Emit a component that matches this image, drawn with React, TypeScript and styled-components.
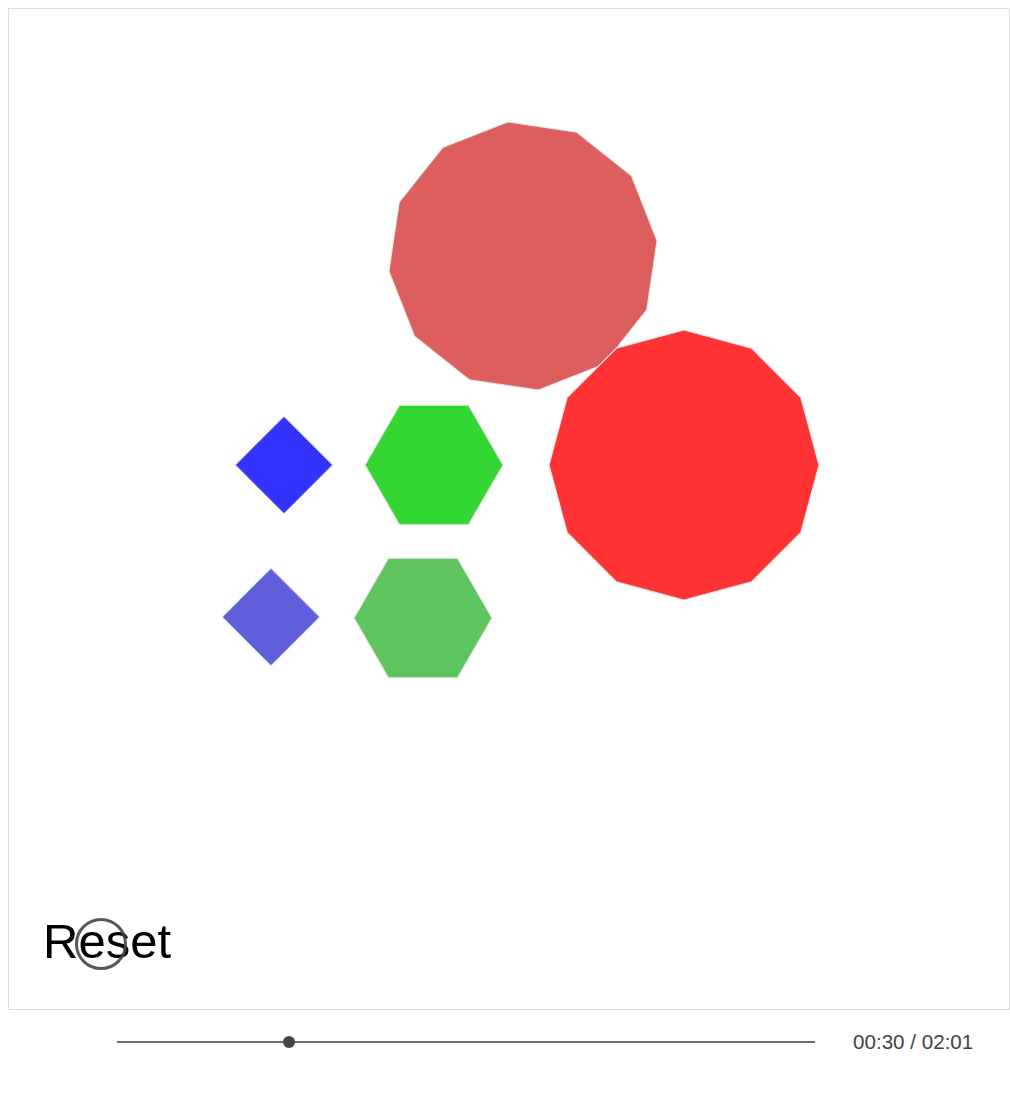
import React from 'react';
import styled, { createGlobalStyle } from 'styled-components';

const GlobalStyle = createGlobalStyle`
  html, body {
    overflow: visible;
  }
  body {
    margin: 8px 0 8px 8px;
    background: #ffffff;
    font-family: 'Liberation Sans', Arial, sans-serif;
  }
`;

const Stage = styled.div`
  position: relative;
  box-sizing: border-box;
  width: 1002px;
  height: 1002px;
  border: 1px solid #dddddd;
  display: flex;
  align-items: flex-end;
  padding: 0 0 40px 34px;
`;

const Drawing = styled.svg`
  position: absolute;
  inset: 0;
  width: 1000px;
  height: 1000px;
`;

const ResetButton = styled.button`
  position: relative;
  z-index: 1;
  background: none;
  border: none;
  padding: 0;
  margin: 0;
  font-family: 'Liberation Sans', Arial, sans-serif;
  font-size: 49px;
  line-height: 56px;
  color: #000000;
  cursor: pointer;
`;

const TouchRing = styled.div`
  position: absolute;
  left: 66px;
  top: 909px;
  width: 52px;
  height: 52px;
  border: 3px solid rgba(70, 70, 70, 0.9);
  border-radius: 50%;
  box-sizing: border-box;
  pointer-events: none;
  z-index: 2;
`;

const Controls = styled.div`
  display: flex;
  align-items: center;
  height: 64px;
  width: 1002px;
`;

const Track = styled.div`
  position: relative;
  margin-left: 109px;
  width: 698px;
  height: 12px;
  &::before {
    content: '';
    position: absolute;
    left: 0;
    right: 0;
    top: 5px;
    height: 2px;
    background: #6b6b6b;
  }
`;

const Thumb = styled.div`
  position: absolute;
  top: 0;
  width: 12px;
  height: 12px;
  margin-left: -7px;
  border-radius: 50%;
  background: #444444;
`;

const TimeLabel = styled.span`
  margin-left: 38px;
  font-family: 'Liberation Sans', Arial, sans-serif;
  font-size: 20.6px;
  color: #444444;
`;

type Shape = { cx: number; cy: number; r: number; sides: number; rot: number; fill: string };

const shapes: Shape[] = [
  { cx: 514, cy: 247, r: 135, sides: 12, rot: -6.5, fill: '#dd5e5e' },
  { cx: 675, cy: 456, r: 135, sides: 12, rot: 0, fill: '#ff3333' },
  { cx: 275, cy: 456, r: 49, sides: 4, rot: 0, fill: '#3333ff' },
  { cx: 425, cy: 456, r: 69, sides: 6, rot: 30, fill: '#33d633' },
  { cx: 262, cy: 608, r: 49, sides: 4, rot: 0, fill: '#5e5edd' },
  { cx: 414, cy: 609, r: 69, sides: 6, rot: 30, fill: '#5ec45e' },
];

function polygonPoints(s: Shape) {
  const pts: string[] = [];
  for (let i = 0; i < s.sides; i++) {
    const a = ((s.rot + (i * 360) / s.sides) * Math.PI) / 180;
    pts.push(`${(s.cx + s.r * Math.sin(a)).toFixed(1)},${(s.cy - s.r * Math.cos(a)).toFixed(1)}`);
  }
  return pts.join(' ');
}

const elapsed = 30;
const total = 121;

const fmt = (t: number) => {
  const m = Math.floor(t / 60);
  const s = t % 60;
  return `${String(m).padStart(2, '0')}:${String(s).padStart(2, '0')}`;
};

const App: React.FC = () => {
  return (
    <>
      <GlobalStyle />
      <Stage>
        <Drawing viewBox="0 0 1000 1000">
          {shapes.map((s, i) => (
            <polygon key={i} points={polygonPoints(s)} fill={s.fill} stroke="#e6e6e6" strokeWidth={1.2} />
          ))}
        </Drawing>
        <ResetButton>Reset</ResetButton>
        <TouchRing />
      </Stage>
      <Controls>
        <Track>
          <Thumb style={{ left: `${(elapsed / total) * 100}%` }} />
        </Track>
        <TimeLabel>
          {fmt(elapsed)} / {fmt(total)}
        </TimeLabel>
      </Controls>
    </>
  );
};

export default App;
